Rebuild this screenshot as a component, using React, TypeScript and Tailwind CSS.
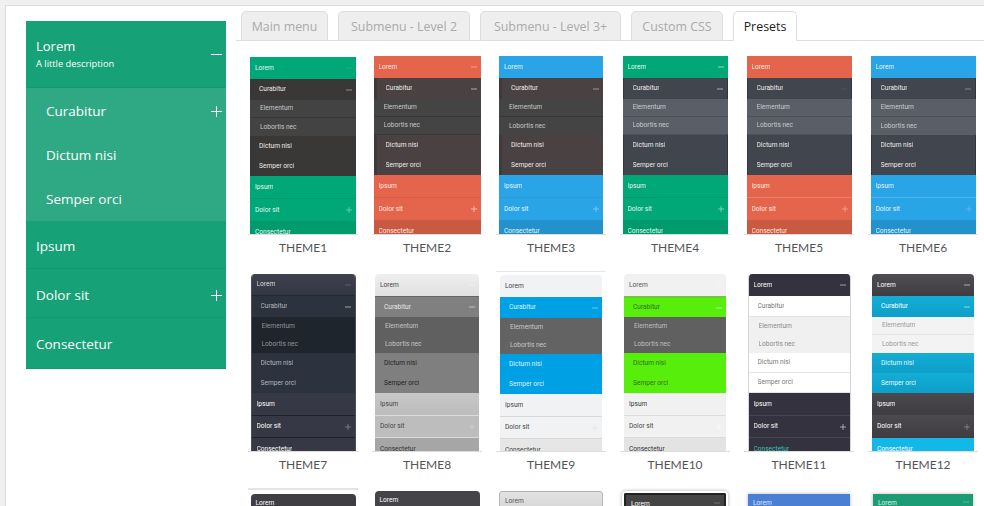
import { clsx } from 'clsx';

interface Theme {
  name: string;
  size: string; // width + height of the preview
  shell?: string;
  cap?: boolean;
  head: string;
  headIcon: string;
  active: string;
  activeIcon: string;
  child: string;
  sub: string;
  sub2: string;
  ipsum?: string;
  dolor?: string;
  dolorIcon: string;
  last: string;
  divider?: string;
}

const GREEN = 'bg-[#00a878] text-[#e6f6f1]';
const RED = 'bg-[#e5654c] text-[#fbe8e4]';
const BLUE = 'bg-[#29a4e6] text-[#e6f4fc]';
const BROWN = 'bg-[#4a4242] text-[#ececec]';
const SLATE = 'bg-[#41454e] text-[#ececec] border-x border-[#33363d]';
const GREY_SUB = 'bg-[#5a5e67] text-[#c9cbd0] border-b border-[#4c5058]';

const themes: Theme[] = [
  { name: 'THEME1', size: 'w-[106px] h-[177px]', head: GREEN, headIcon: 'text-[#2cb88f]', active: 'bg-[#3a3737] text-[#ececec]', activeIcon: 'text-[#d5d5d5]', child: 'bg-[#3a3737] text-[#ececec]', sub: 'bg-[#434343] text-[#c8c8c8] border-b border-[#383838]', sub2: 'bg-[#434343] text-[#c8c8c8]', dolorIcon: 'text-[#a9e3d0]', last: 'bg-[#009a6c] text-[#e6f6f1]', divider: 'border-t border-[#009a6c]' },
  { name: 'THEME2', size: 'w-[107px] h-[178px]', head: RED, headIcon: 'text-[#f7d3cb]', active: `${BROWN} border-l-[3px] border-[#3b3b3b]`, activeIcon: 'text-white', child: `${BROWN} border-l-[3px] border-[#3b3b3b]`, sub: 'bg-[#444444] text-[#c8c8c8] border-b border-[#383838]', sub2: 'bg-[#444444] text-[#c8c8c8] border-b border-[#383838]', dolorIcon: 'text-white', last: 'bg-[#c85a42] text-[#fbe8e4]', divider: 'border-t border-[#d65d45]' },
  { name: 'THEME3', size: 'w-[104px] h-[178px]', head: BLUE, headIcon: 'text-[#29a4e6]', active: `${BROWN} border-l-[3px] border-[#3b3b3b]`, activeIcon: 'text-[#e0e0e0]', child: `${BROWN} border-l-[3px] border-[#3b3b3b]`, sub: 'bg-[#444444] text-[#c8c8c8] border-b border-[#383838]', sub2: 'bg-[#444444] text-[#c8c8c8]', dolorIcon: 'text-[#b4defa]', last: 'bg-[#2291cc] text-[#e6f4fc]', divider: 'border-t border-[#2a9bd8]' },
  { name: 'THEME4', size: 'w-[105px] h-[178px]', head: GREEN, headIcon: 'text-white', active: SLATE, activeIcon: 'text-white', child: SLATE, sub: GREY_SUB, sub2: GREY_SUB, dolorIcon: 'text-[#c4eee0]', last: 'bg-[#009a6c] text-[#e6f6f1]', divider: 'border-t border-[#009a6c]' },
  { name: 'THEME5', size: 'w-[105px] h-[178px]', head: RED, headIcon: 'text-[#e5654c]', active: SLATE, activeIcon: 'text-[#5a5e67]', child: SLATE, sub: GREY_SUB, sub2: GREY_SUB, dolorIcon: 'text-[#f3c5bb]', last: 'bg-[#c85a42] text-[#fbe8e4]', divider: 'border-t border-[#ec7d68]' },
  { name: 'THEME6', size: 'w-[105px] h-[178px]', head: BLUE, headIcon: 'text-[#29a4e6]', active: SLATE, activeIcon: 'text-[#c0c2c7]', child: SLATE, sub: GREY_SUB, sub2: 'bg-[#5a5e67] text-[#c9cbd0]', dolorIcon: 'text-[#7cc6ef]', last: 'bg-[#2291cc] text-[#e6f4fc]', divider: 'border-t border-[#4cb4ec]' },
  { name: 'THEME7', size: 'w-[105px] h-[177px]', shell: 'rounded-t-[4px] border-x border-[#4b4e58]', head: 'bg-linear-to-b from-[#3f414e] to-[#343743] text-[#dcdcdc] border-b border-[#232730]', headIcon: 'text-[#787b86]', active: 'bg-[#2c323e] text-[#b4b8bf]', activeIcon: 'text-white', child: 'bg-[#2c323e] text-[#b4b8bf]', sub: 'bg-[#1f252d] text-[#8f949b]', sub2: 'bg-[#1f252d] text-[#8f949b]', ipsum: 'bg-[#363945] text-white', dolor: 'bg-[#363945] text-white border-y border-[#1f222a]', dolorIcon: 'text-[#a2a4ab]', last: 'bg-[#363945] text-white' },
  { name: 'THEME8', size: 'w-[104px] h-[177px]', shell: 'rounded-t-[4px]', head: 'bg-linear-to-b from-[#efefef] to-[#e0e0e0] text-[#444444]', headIcon: 'text-[#f5f5f5]', active: 'bg-[#808080] text-[#e8e8e8] border-t border-[#666666]', activeIcon: 'text-white', child: 'bg-[#7f7f7f] text-[#222222]', sub: 'bg-[#606060] text-[#c4c4c4]', sub2: 'bg-[#606060] text-[#c4c4c4]', ipsum: 'bg-linear-to-b from-[#c8c8c8] to-[#bcbcbc] text-[#444444]', dolor: 'bg-[#bdbdbd] text-[#444444] border-y border-[#dadada]', dolorIcon: 'text-[#d8d8d8]', last: 'bg-[#a6a6a6] text-[#333333]' },
  { name: 'THEME9', size: 'w-[102px] h-[176px]', cap: true, shell: 'rounded-t-[4px]', head: 'bg-[#f1f2f4] text-[#444444]', headIcon: 'text-[#f8f8f8]', active: 'bg-[#00a1e4] text-[#dff3fc]', activeIcon: 'text-[#bfe7f9]', child: 'bg-[#00a1e4] text-[#dff3fc]', sub: 'bg-[#636363] text-[#c8c8c8]', sub2: 'bg-[#636363] text-[#c8c8c8]', ipsum: 'bg-[#f1f2f4] text-[#444444]', dolor: 'bg-[#f1f2f4] text-[#444444] border-y border-[#d8d8d8]', dolorIcon: 'text-[#e0e0e0]', last: 'bg-[#e6e6e6] text-[#444444]' },
  { name: 'THEME10', size: 'w-[102px] h-[177px]', shell: 'rounded-t-[4px]', head: 'bg-[#f1f1f2] text-[#555555]', headIcon: 'text-[#f9f9f9]', active: 'bg-[#56ee0a] text-[#3a6a20] border-t-2 border-[#6cc93c]', activeIcon: 'text-white', child: 'bg-[#56ee0a] text-[#3a6a20]', sub: 'bg-[#606060] text-[#bfbfbf]', sub2: 'bg-[#606060] text-[#bfbfbf]', ipsum: 'bg-[#f1f1f2] text-[#333333]', dolor: 'bg-[#f1f1f2] text-[#444444] border-y border-[#dddddd]', dolorIcon: 'text-[#fafafa]', last: 'bg-[#e3e3e3] text-[#333333]' },
  { name: 'THEME11', size: 'w-[103px] h-[177px]', shell: 'rounded-t-[4px] border-x border-[#d5d5d8]', head: 'bg-[#33323e] text-white', headIcon: 'text-white', active: 'bg-white text-[#777777] border-b border-[#e4e4e4]', activeIcon: 'text-white', child: 'bg-white text-[#777777] border-b border-[#e4e4e4]', sub: 'bg-[#f0f0f0] text-[#8a8a8a]', sub2: 'bg-[#f0f0f0] text-[#8a8a8a]', ipsum: 'bg-[#33323e] text-white', dolor: 'bg-[#33323e] text-white border-y border-[#45444f]', dolorIcon: 'text-white', last: 'bg-[#33323e] text-[#35c1b4]' },
  { name: 'THEME12', size: 'w-[102px] h-[177px]', shell: 'rounded-t-[4px]', head: 'bg-linear-to-b from-[#4f4d52] to-[#3f3d41] text-white', headIcon: 'text-white', active: 'bg-linear-to-b from-[#13add6] to-[#0d9fc7] text-white', activeIcon: 'text-white', child: 'bg-linear-to-b from-[#13add6] to-[#0d9fc7] text-[#e3f6fb]', sub: 'bg-[#f3f3f3] text-[#9a9a9a] border-b border-[#e3e3e3]', sub2: 'bg-[#f3f3f3] text-[#9a9a9a]', ipsum: 'bg-linear-to-b from-[#4b494e] to-[#3f3d41] text-white', dolor: 'bg-linear-to-b from-[#4b494e] to-[#3f3d41] text-white', dolorIcon: 'text-[#a6a6a6]', last: 'bg-[#12b8e8] text-white' },
];

const peeks = [
  { box: 'w-[105px] mt-[4px] bg-[#3f3f43] text-white rounded-t-[4px]', icon: '', cap: true },
  { box: 'w-[105px] mt-[5px] bg-[#454449] text-white rounded-t-[4px]', icon: '' },
  { box: 'w-[104px] mt-[5px] bg-linear-to-b from-[#e2e2e2] to-[#d0d0d0] text-[#555555] border border-[#b5b5b5] rounded-t-[3px]', icon: '' },
  { box: 'w-[102px] mt-[7px] bg-[#444444] text-white border-t-2 border-x-2 border-[#222222] rounded-t-[2px] shadow-[0_0_0_2px_#ffffff,0_0_3px_3px_#cccccc]', icon: 'text-[#999999]' },
  { box: 'w-[102px] mt-[8px] bg-[#4a7fd4] text-[#dce7f8] shadow-[0_0_4px_#bbbbbb]', icon: '' },
  { box: 'w-[100px] mt-[8px] bg-[#1c9c74] text-[#d9f1e8] shadow-[0_0_4px_#bbbbbb]', icon: 'text-[#8fd3bc]' },
];

function Sign({ plus, className }: { plus?: boolean; className?: string }) {
  return (
    <svg viewBox="0 0 11 11" className={clsx('shrink-0', className)} fill="none" stroke="currentColor" strokeWidth="1">
      <path d="M0 5.5h11" />
      {plus && <path d="M5.5 0v11" />}
    </svg>
  );
}

function Row({ label, rowClass, h, pad, icon, plus }: { label: string; rowClass: string; h: string; pad: string; icon?: string; plus?: boolean }) {
  return (
    <div className={clsx('flex items-center justify-between pr-[4px]', h, pad, rowClass)}>
      <span className="truncate">{label}</span>
      {icon && <Sign plus={plus} className={clsx('w-[6px] h-[6px]', icon)} />}
    </div>
  );
}

function ThemeCard({ theme }: { theme: Theme }) {
  return (
    <div className="h-[217px] w-[124px] flex flex-col">
      <div className="w-[110px] h-[183px] flex flex-col justify-end items-center border-b border-[#dddddd]">
        {theme.cap && <div className="w-[110px] h-px bg-[#e8e8e8] mt-[2px] mb-auto" />}
        <div className={clsx('overflow-hidden text-[6.6px] leading-none font-["Roboto",sans-serif]', theme.size, theme.shell)}>
          <Row label="Lorem" rowClass={theme.head} h="h-[22px]" pad="pl-[5px]" icon={theme.headIcon} />
          <Row label="Curabitur" rowClass={theme.active} h="h-[21px]" pad="pl-[9px]" icon={theme.activeIcon} />
          <Row label="Elementum" rowClass={theme.sub} h="h-[18px]" pad="pl-[10px]" />
          <Row label="Lobortis nec" rowClass={theme.sub2} h="h-[18px]" pad="pl-[10px]" />
          <Row label="Dictum nisi" rowClass={theme.child} h="h-[20px]" pad="pl-[9px]" />
          <Row label="Semper orci" rowClass={theme.child} h="h-[20px]" pad="pl-[9px]" />
          <Row label="Ipsum" rowClass={theme.ipsum ?? theme.head} h="h-[22px]" pad="pl-[5px]" />
          <Row label="Dolor sit" rowClass={clsx(theme.dolor ?? theme.head, theme.divider)} h="h-[23px]" pad="pl-[5px]" icon={theme.dolorIcon} plus />
          <Row label="Consectetur" rowClass={theme.last} h="h-[22px]" pad="pl-[5px]" />
        </div>
      </div>
      <div className='w-[110px] h-[25px] pt-[4px] text-center text-[12px] leading-[18px] text-[#555555] font-["Lato",sans-serif]'>
        {theme.name}
      </div>
    </div>
  );
}

function Tab({ label, width, active }: { label: string; width: string; active?: boolean }) {
  return (
    <div
      className={clsx(
        'h-[30px] rounded-t-[5px] border border-[#dddddd] flex items-center justify-center text-[12.4px] pt-[2px]',
        width,
        active ? 'bg-white border-b-white text-[#222222]' : 'bg-[#eeeeee] text-[#aaaaaa]',
      )}
    >
      {label}
    </div>
  );
}

export default function App() {
  return (
    <div className='h-[506px] w-[984px] overflow-hidden bg-[#f0f0f0] pt-[5px] pl-[5px] font-["Open_Sans",sans-serif]'>
      <div className="h-[501px] bg-white border-t border-l border-[#dddddd] flex">
        {/* Live menu preview */}
        <div className="w-[230px] shrink-0 pl-[20px] pt-[15px]">
          <div className="w-[200px] bg-[#16a276] text-white text-[13.5px]">
            <div className="h-[67px] pl-[10px] pr-[4px] flex items-center justify-between border-b border-[#13996f]">
              <div className="mt-[1px]">
                <div className="leading-[19px] text-[13px]">Lorem</div>
                <div className="text-[9.3px] leading-[16px] font-medium">A little description</div>
              </div>
              <Sign className="w-[11px] h-[11px] mt-[1px]" />
            </div>
            <div className="bg-[#2ea984]">
              <div className="h-[45px] pl-[20px] pr-[4px] pt-[1px] flex items-center justify-between">
                Curabitur
                <Sign plus className="w-[11px] h-[11px]" />
              </div>
              <div className="h-[44px] pl-[20px] flex items-center">Dictum nisi</div>
              <div className="h-[44px] pl-[20px] flex items-center">Semper orci</div>
            </div>
            <div className="h-[48px] pl-[10px] pt-[3px] flex items-center border-b border-[#13996f]">Ipsum</div>
            <div className="h-[49px] pl-[10px] pr-[4px] pt-[4px] flex items-center justify-between border-b border-[#13996f]">
              Dolor sit
              <Sign plus className="w-[11px] h-[11px]" />
            </div>
            <div className="h-[51px] pl-[10px] pt-[3px] flex items-center border-b border-[#13996f]">Consectetur</div>
          </div>
        </div>

        {/* Settings tabs */}
        <div className="flex-1 min-w-0">
          <div className="mt-[5px] h-[30px] flex border-b border-[#dddddd] pl-[5px]">
            <div className="flex gap-[10px] h-[30px]">
              <Tab label="Main menu" width="w-[87px]" />
              <Tab label="Submenu - Level 2" width="w-[132px]" />
              <Tab label="Submenu - Level 3+" width="w-[141px]" />
              <Tab label="Custom CSS" width="w-[92px]" />
              <Tab label="Presets" width="w-[64px]" active />
            </div>
          </div>
          <div className="pl-[12px] pt-[11px] grid grid-cols-[repeat(6,124px)]">
            {themes.map((theme) => (
              <ThemeCard key={theme.name} theme={theme} />
            ))}
            {peeks.map((peek, i) => (
              <div key={i} className="w-[110px] flex flex-col items-center">
                {peek.cap && <div className="w-[110px] h-[2px] bg-[#e4e4e4] mt-[2px]" />}
                <div className={clsx('h-[30px] pl-[5px] pt-[5px] text-[6.6px] flex justify-between pr-[4px] font-["Roboto",sans-serif]', peek.box)}>
                  Lorem
                  {peek.icon && <Sign className={clsx('w-[6px] h-[6px]', peek.icon)} />}
                </div>
              </div>
            ))}
          </div>
        </div>
      </div>
    </div>
  );
}
